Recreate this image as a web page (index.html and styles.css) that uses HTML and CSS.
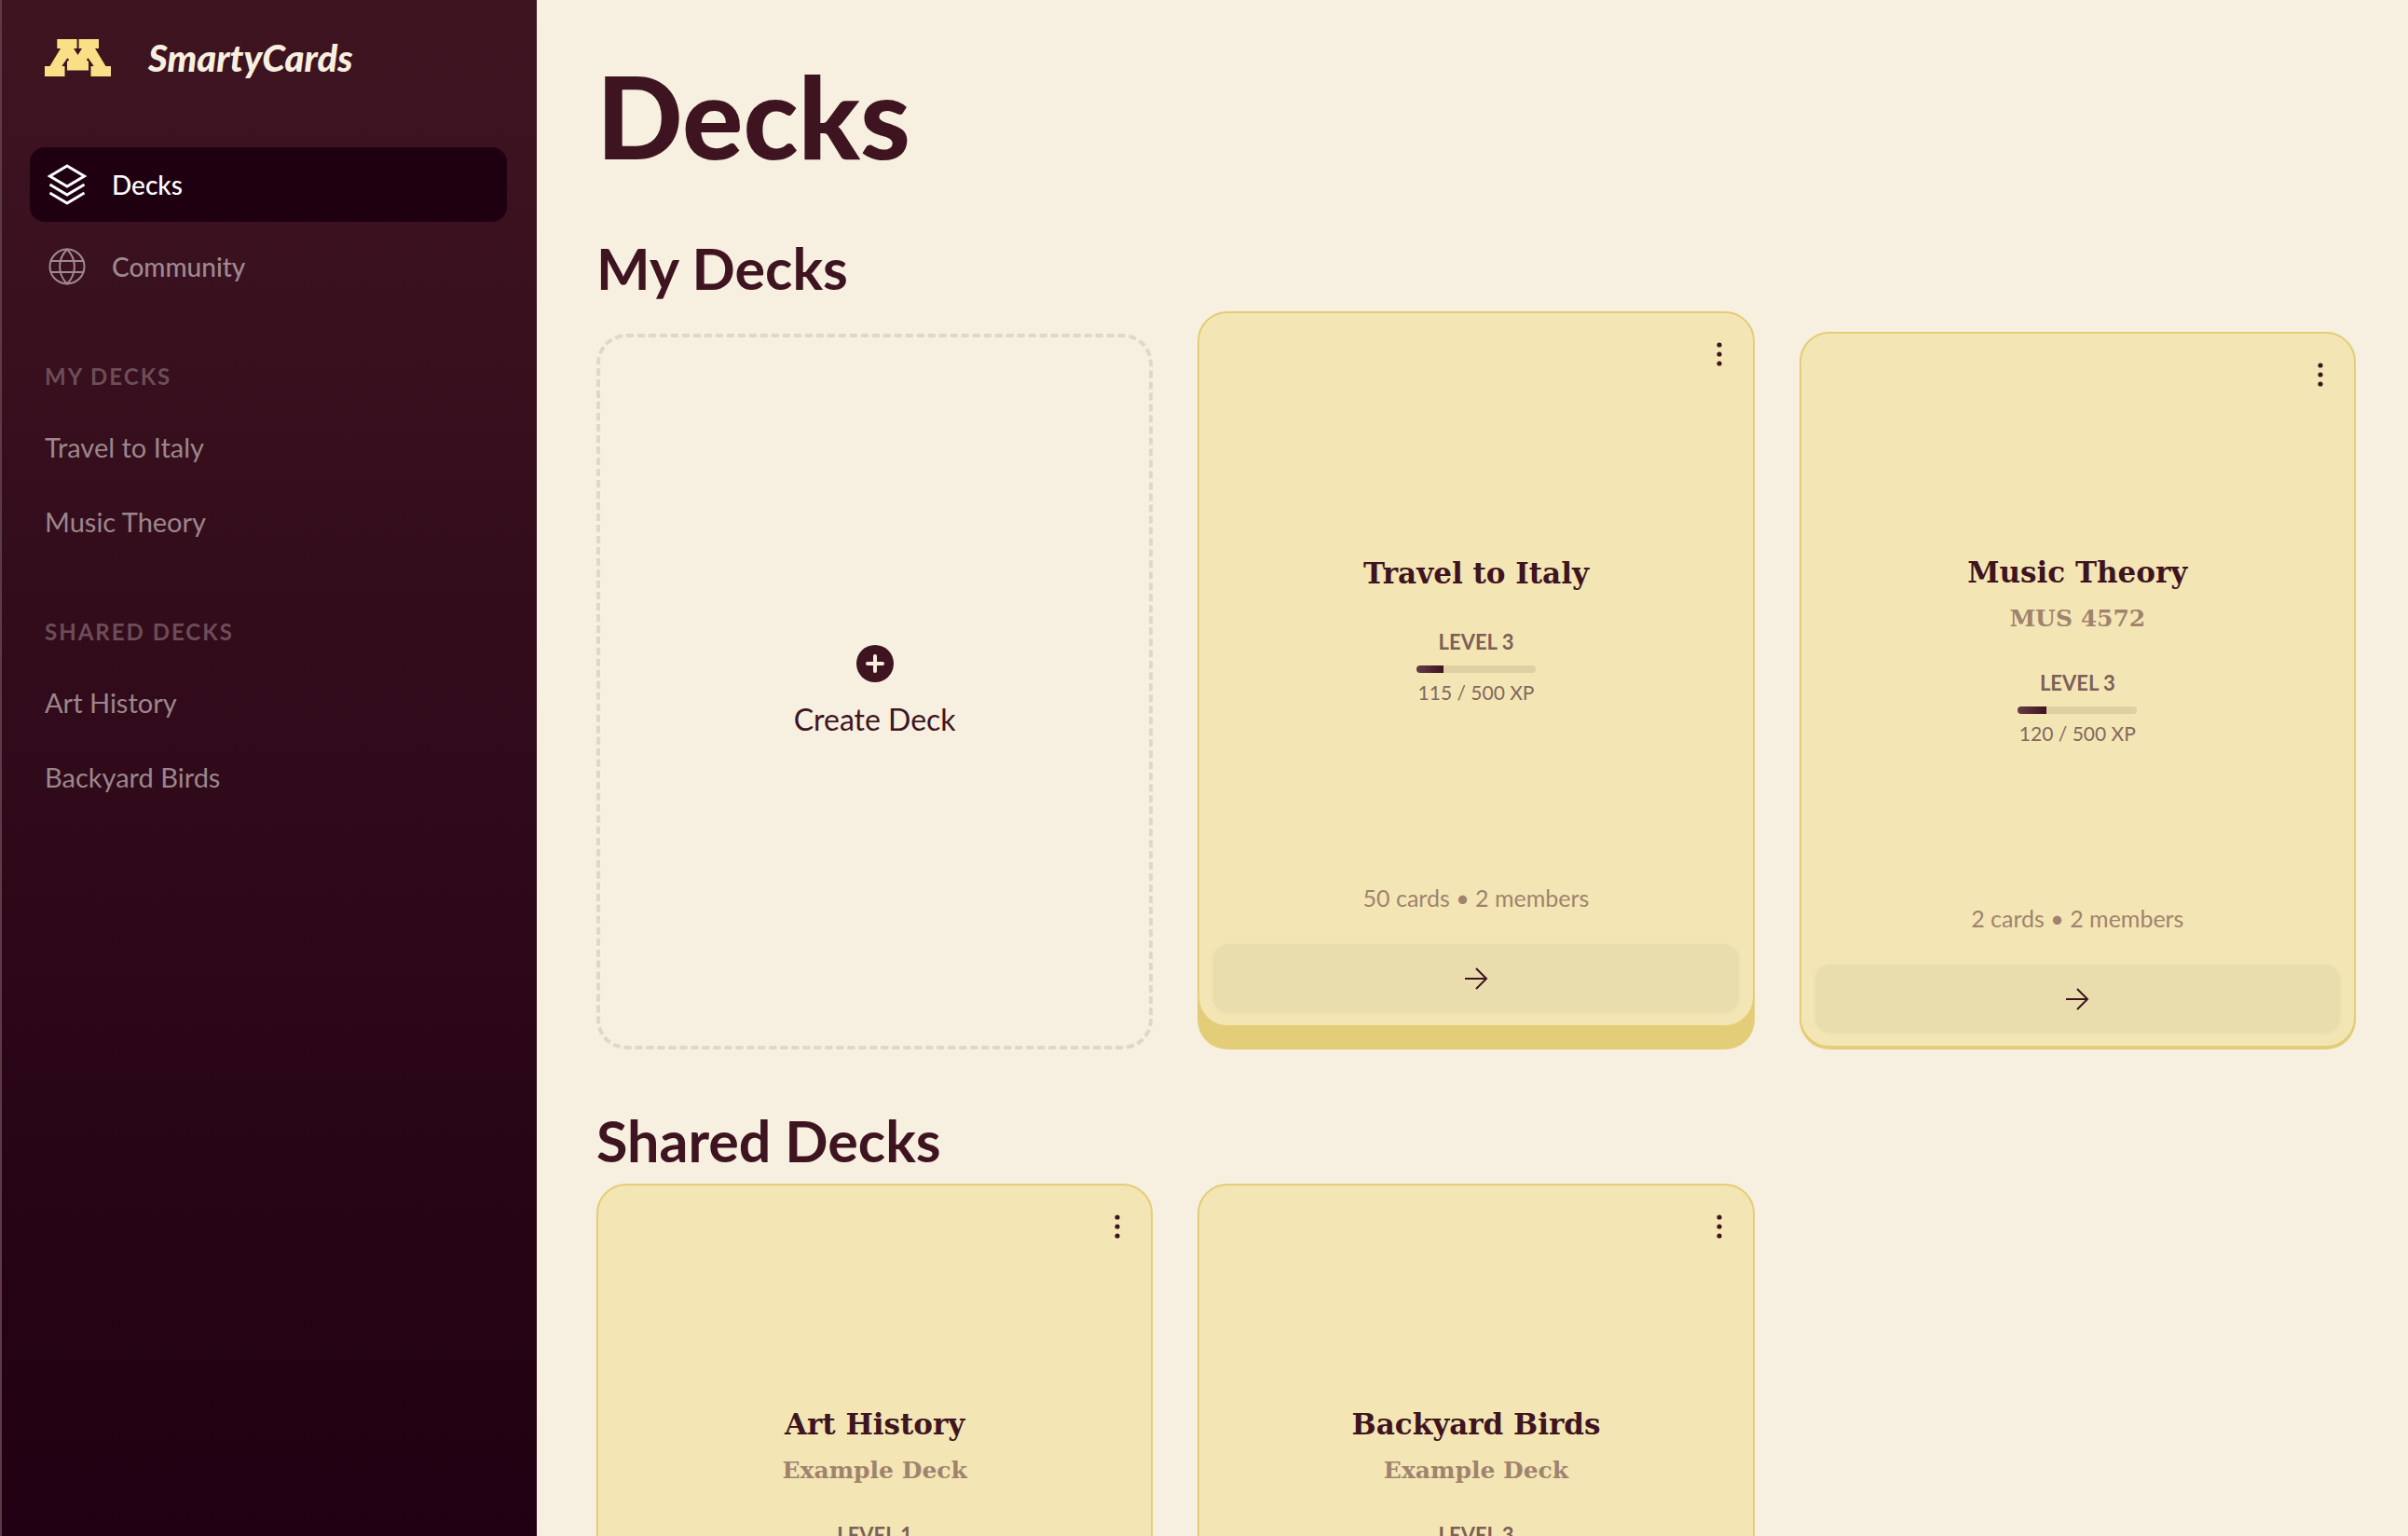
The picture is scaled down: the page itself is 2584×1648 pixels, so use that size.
FILE: index.html
```html
<!DOCTYPE html>
<html lang="en">
<head>
<meta charset="utf-8">
<title>SmartyCards</title>
<link rel="stylesheet" href="styles.css">
</head>
<body>
<svg class="sprite" aria-hidden="true">
  <symbol id="icon-dots" viewBox="0 0 6 26"><circle cx="3" cy="3" r="2.6"/><circle cx="3" cy="13" r="2.6"/><circle cx="3" cy="23" r="2.6"/></symbol>
  <symbol id="icon-arrow" viewBox="0 0 26 26"><path d="M1 13H24M13 2L24 13L13 24" fill="none" stroke="currentColor" stroke-width="2"/></symbol>
</svg>
<div class="app">
  <aside class="sidebar">
    <a class="brand" href="#">
      <svg class="brand-mark" viewBox="0 0 71 40" aria-hidden="true"><path d="M13.300 0H34.600V10H31L35.500 17L40 10H36.600V0H58V10H54L65.500 29H71V40H49.500V29H52.700L46.700 20.300L44.700 22.300L47 24V33.500H24V24L26.300 22.300L24.300 20.300L18.300 29H21.500V40H0V29H5.500L17 10H13.300Z"/></svg>
      <span class="brand-name">SmartyCards</span>
    </a>
    <nav class="nav">
      <a class="nav-item active" href="#">
        <svg class="nav-icon" viewBox="0 0 44 44" aria-hidden="true"><path d="M22 2L40.500 13L22 24L3.500 13ZM3.500 22L22 33L40.500 22M3.500 31L22 42L40.500 31" stroke-width="3"/></svg>
        Decks
      </a>
      <a class="nav-item" href="#">
        <svg class="nav-icon" viewBox="0 0 44 44" aria-hidden="true"><g stroke-width="2"><circle cx="22" cy="22" r="18.500"/><path d="M22 3.500C11.500 14 11.500 30 22 40.500C32.500 30 32.500 14 22 3.500ZM4.500 16H39.500M4.500 28H39.500"/></g></svg>
        Community
      </a>
    </nav>
    <nav class="deck-nav">
      <h2 class="nav-heading">MY DECKS</h2>
      <a class="deck-link" href="#">Travel to Italy</a>
      <a class="deck-link" href="#">Music Theory</a>
    </nav>
    <nav class="deck-nav">
      <h2 class="nav-heading">SHARED DECKS</h2>
      <a class="deck-link" href="#">Art History</a>
      <a class="deck-link" href="#">Backyard Birds</a>
    </nav>
  </aside>

  <main class="main">
    <h1 class="page-title">Decks</h1>

    <section class="section">
      <h2 class="section-title">My Decks</h2>
      <div class="grid grid-own">
        <button class="create" type="button">
          <svg class="create-icon" viewBox="0 0 40 40" aria-hidden="true"><circle cx="20" cy="20" r="20" fill="currentColor"/><path class="create-plus" d="M20 12V28M12 20H28"/></svg>
          Create Deck
        </button>

        <article class="card raised">
          <div class="card-head"><button class="menu" type="button" aria-label="Deck options"><svg class="dots"><use href="#icon-dots"/></svg></button></div>
          <div class="card-body">
            <h3 class="card-title">Travel to Italy</h3>
            <div class="level">LEVEL 3</div>
            <div class="bar"><div class="bar-fill" style="width:23%"></div></div>
            <div class="xp">115 / 500 XP</div>
          </div>
          <p class="count">50 cards • 2 members</p>
          <button class="open" type="button" aria-label="Open deck"><svg class="arrow"><use href="#icon-arrow"/></svg></button>
        </article>

        <article class="card">
          <div class="card-head"><button class="menu" type="button" aria-label="Deck options"><svg class="dots"><use href="#icon-dots"/></svg></button></div>
          <div class="card-body">
            <h3 class="card-title">Music Theory</h3>
            <p class="card-sub">MUS 4572</p>
            <div class="level">LEVEL 3</div>
            <div class="bar"><div class="bar-fill" style="width:24%"></div></div>
            <div class="xp">120 / 500 XP</div>
          </div>
          <p class="count">2 cards • 2 members</p>
          <button class="open" type="button" aria-label="Open deck"><svg class="arrow"><use href="#icon-arrow"/></svg></button>
        </article>
      </div>
    </section>

    <section class="section">
      <h2 class="section-title">Shared Decks</h2>
      <div class="grid">
        <article class="card">
          <div class="card-head"><button class="menu" type="button" aria-label="Deck options"><svg class="dots"><use href="#icon-dots"/></svg></button></div>
          <div class="card-body">
            <h3 class="card-title">Art History</h3>
            <p class="card-sub">Example Deck</p>
            <div class="level">LEVEL 1</div>
            <div class="bar"><div class="bar-fill" style="width:20%"></div></div>
            <div class="xp">20 / 100 XP</div>
          </div>
          <p class="count">10 cards • 2 members</p>
          <button class="open" type="button" aria-label="Open deck"><svg class="arrow"><use href="#icon-arrow"/></svg></button>
        </article>

        <article class="card">
          <div class="card-head"><button class="menu" type="button" aria-label="Deck options"><svg class="dots"><use href="#icon-dots"/></svg></button></div>
          <div class="card-body">
            <h3 class="card-title">Backyard Birds</h3>
            <p class="card-sub">Example Deck</p>
            <div class="level">LEVEL 3</div>
            <div class="bar"><div class="bar-fill" style="width:20%"></div></div>
            <div class="xp">100 / 500 XP</div>
          </div>
          <p class="count">10 cards • 2 members</p>
          <button class="open" type="button" aria-label="Open deck"><svg class="arrow"><use href="#icon-arrow"/></svg></button>
        </article>
      </div>
    </section>
  </main>
</div>
</body>
</html>
```

FILE: styles.css
```css
:root {
  --maroon: #3f1421;
  --cream: #f7efdf;
  --card: #f4e6b4;
  --gold: #e4cd78;
}

* { box-sizing: border-box; }

body {
  margin: 0;
  background: var(--cream);
  color: var(--maroon);
  font-family: Lato, "Open Sans", sans-serif;
  font-size: 28px;
}

h1, h2, h3, p { margin: 0; }
a { color: inherit; text-decoration: none; }
button {
  padding: 0;
  border: 0;
  background: none;
  color: inherit;
  font: inherit;
  cursor: pointer;
}
.sprite { display: none; }

.app { display: flex; height: 100vh; overflow: hidden; }

/* Sidebar */
.sidebar {
  flex: none;
  width: 576px;
  padding: 42px 32px 0 30px;
  border-left: 2px solid #5e3a46;
  background: linear-gradient(#3f1421, #200012);
}
.brand {
  display: flex;
  align-items: center;
  gap: 40px;
  height: 40px;
  margin: 0 16px 76px;
}
.brand-mark { width: 71px; height: 40px; fill: #fbdf87; }
.brand-name {
  color: var(--cream);
  font-size: 40px;
  font-style: italic;
  font-weight: 900;
  line-height: 40px;
}
.nav { display: flex; flex-direction: column; gap: 8px; }
.nav-item {
  display: flex;
  align-items: center;
  gap: 26px;
  height: 80px;
  padding: 0 18px;
  border-radius: 16px;
  color: #9f8990;
  font-weight: 500;
}
.nav-item.active { background: #1e0011; color: #fff; }
.nav-icon { width: 44px; height: 44px; fill: none; stroke: currentColor; }
.deck-nav { display: flex; flex-direction: column; margin-top: 60px; }
.nav-heading {
  margin: 0 16px 18px;
  color: #6d4d58;
  font-size: 24px;
  font-weight: 700;
  letter-spacing: 2px;
  line-height: 36px;
}
.deck-link { padding: 0 16px; color: #9c868d; font-size: 29px; line-height: 80px; }

/* Main column */
.main { flex: 1; min-width: 0; padding: 52px 56px 0 64px; }
.page-title {
  margin-bottom: 56px;
  font-size: 122px;
  font-weight: 900;
  line-height: 144px;
}
.section { margin-bottom: 62px; }
.section-title {
  margin-bottom: 10px;
  font-size: 61px;
  font-weight: 700;
  line-height: 72px;
}
.grid {
  display: grid;
  grid-template-columns: repeat(3, minmax(0, 1fr));
  gap: 48px;
  align-items: end;
}
.grid-own { padding-top: 22px; }

.create {
  display: flex;
  flex-direction: column;
  align-items: center;
  justify-content: center;
  gap: 18px;
  height: 768px;
  padding-top: 2px;
  border: 4px dashed #dfd8c8;
  border-radius: 32px;
  font-size: 32px;
  line-height: 44px;
}
.create-icon { width: 40px; height: 40px; }
.create-plus { fill: none; stroke: var(--cream); stroke-width: 4; stroke-linecap: round; }

/* Deck card */
.card {
  display: flex;
  flex-direction: column;
  height: 768px;
  margin-bottom: 2px;
  padding: 0 15px 14px;
  border: 2px solid var(--gold);
  border-radius: 32px;
  background: var(--card);
  box-shadow: 0 2px 0 var(--gold);
  text-align: center;
}
.card.raised {
  margin-top: -22px;
  margin-bottom: 24px;
  box-shadow: 0 24px 0 var(--gold);
}
.card-head { display: flex; justify-content: flex-end; height: 64px; padding: 24px 1px 0 0; }
.menu { display: flex; align-items: center; justify-content: center; width: 40px; height: 40px; }
.dots { width: 6px; height: 26px; fill: currentColor; }
.card-body {
  flex: 1;
  display: flex;
  flex-direction: column;
  align-items: center;
  justify-content: center;
}
.card-title, .card-sub { font-family: "DejaVu Serif", serif; font-weight: 700; }
.card-title { font-size: 31px; line-height: 48px; }
.card-sub { margin-bottom: -6px; color: #a0836f; font-size: 25px; line-height: 51px; }
.level {
  margin-top: 36px;
  color: #7c6059;
  font-size: 22px;
  font-weight: 700;
  line-height: 28px;
}
.bar {
  width: 128px;
  height: 8px;
  margin: 11px 0 7px;
  border-radius: 4px;
  background: #dfd0a4;
  overflow: hidden;
}
.bar-fill { height: 8px; background: linear-gradient(90deg, #653c45, #3f1421); }
.xp { color: #846860; font-size: 21px; line-height: 28px; }
.count { margin-bottom: 34px; color: #9f836f; font-size: 25px; line-height: 32px; }
.open {
  display: flex;
  align-items: center;
  justify-content: center;
  height: 73px;
  border-radius: 16px;
  background: #e9dcad;
  box-shadow: 0 1px 4px #e9dcad;
}
.arrow { width: 26px; height: 26px; }
```
